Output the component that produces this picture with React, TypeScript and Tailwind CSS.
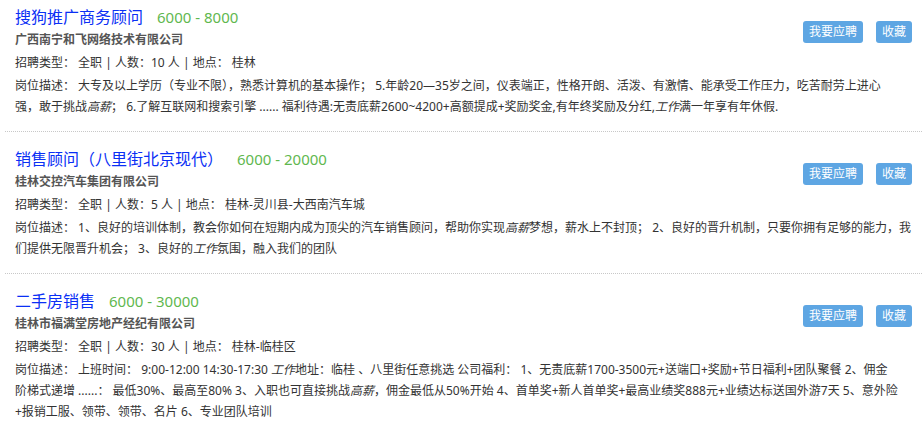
import React from "react";

type Seg = string | { em: string };

type Job = {
  title: string;
  salary: string;
  company: string;
  count: string;
  place: string;
  lines: Seg[][];
};

const jobs: Job[] = [
  {
    title: "搜狗推广商务顾问",
    salary: "6000 - 8000",
    company: "广西南宁和飞网络技术有限公司",
    count: "10",
    place: "桂林",
    lines: [
      [
        "岗位描述： 大专及以上学历（专业不限），熟悉计算机的基本操作； 5.年龄20—35岁之间，仪表端正，性格开朗、活泼、有激情、能承受工作压力，吃苦耐劳上进心",
      ],
      [
        "强，敢于挑战",
        { em: "高薪" },
        "； 6.了解互联网和搜索引擎 ...... 福利待遇:无责底薪2600~4200+高额提成+奖励奖金,有年终奖励及分红,",
        { em: "工作" },
        "满一年享有年休假.",
      ],
    ],
  },
  {
    title: "销售顾问（八里街北京现代）",
    salary: "6000 - 20000",
    company: "桂林交控汽车集团有限公司",
    count: "5",
    place: "桂林-灵川县-大西南汽车城",
    lines: [
      [
        "岗位描述： 1、良好的培训体制，教会你如何在短期内成为顶尖的汽车销售顾问，帮助你实现",
        { em: "高薪" },
        "梦想，薪水上不封顶； 2、良好的晋升机制，只要你拥有足够的能力，我",
      ],
      ["们提供无限晋升机会； 3、良好的", { em: "工作" }, "氛围，融入我们的团队"],
    ],
  },
  {
    title: "二手房销售",
    salary: "6000 - 30000",
    company: "桂林市福满堂房地产经纪有限公司",
    count: "30",
    place: "桂林-临桂区",
    lines: [
      [
        "岗位描述： 上班时间： 9:00-12:00 14:30-17:30 ",
        { em: "工作" },
        "地址：临桂 、八里街任意挑选 公司福利： 1、无责底薪1700-3500元+送端口+奖励+节日福利+团队聚餐 2、佣金",
      ],
      [
        "阶梯式递增 ......： 最低30%、最高至80% 3、入职也可直接挑战",
        { em: "高薪" },
        "，佣金最低从50%开始 4、首单奖+新人首单奖+最高业绩奖888元+业绩达标送国外游7天 5、意外险",
      ],
      ["+报销工服、领带、领带、名片 6、专业团队培训"],
    ],
  },
];

function JobItem({ job, first }: { job: Job; first: boolean }) {
  return (
    <div
      className={`${first ? "pt-[5px]" : "pt-[15px]"} pb-[14px] pl-[10px] pr-[10px] border-b border-dotted border-[#c8c8c8]`}
    >
      <div className="flex justify-between h-[24px]">
        <div className="flex items-center h-[24px] whitespace-nowrap">
          <span className="text-[16px] leading-[24px] text-[#0a2ff5]">{job.title}</span>
          <span className="ml-[14px] text-[15px] leading-[24px] text-[#5fb84f]">{job.salary}</span>
        </div>
        <div className="flex gap-[13px] mt-[16px] h-[22px]">
          <span className="h-[22px] px-[6px] text-[12px] leading-[22px] rounded-[3px] text-white bg-[#5ea6e3] whitespace-nowrap">
            我要应聘
          </span>
          <span className="h-[22px] px-[6px] text-[12px] leading-[22px] rounded-[3px] text-white bg-[#5ea6e3] whitespace-nowrap">
            收藏
          </span>
        </div>
      </div>
      <div className="text-[12px] leading-[22px] font-bold text-[#555]">{job.company}</div>
      <div className="text-[12px] leading-[24px] text-[#333] whitespace-nowrap">
        招聘类型： 全职 | 人数：{job.count} 人 | 地点： {job.place}
      </div>
      <div className="text-[12px] leading-[21px] text-[#333]">
        {job.lines.map((line, i) => (
          <div key={i} className="whitespace-nowrap">
            {line.map((s, j) =>
              typeof s === "string" ? (
                <span key={j}>{s}</span>
              ) : (
                <em key={j} className="italic">
                  {s.em}
                </em>
              )
            )}
          </div>
        ))}
      </div>
    </div>
  );
}

export default function App() {
  return (
    <div
      className="w-[922px] h-[429px] overflow-hidden bg-white pl-[5px]"
      style={{ fontFamily: '"Noto Sans", "Noto Sans CJK SC", sans-serif' }}
    >
      {jobs.map((job, i) => (
        <JobItem key={i} job={job} first={i === 0} />
      ))}
    </div>
  );
}
